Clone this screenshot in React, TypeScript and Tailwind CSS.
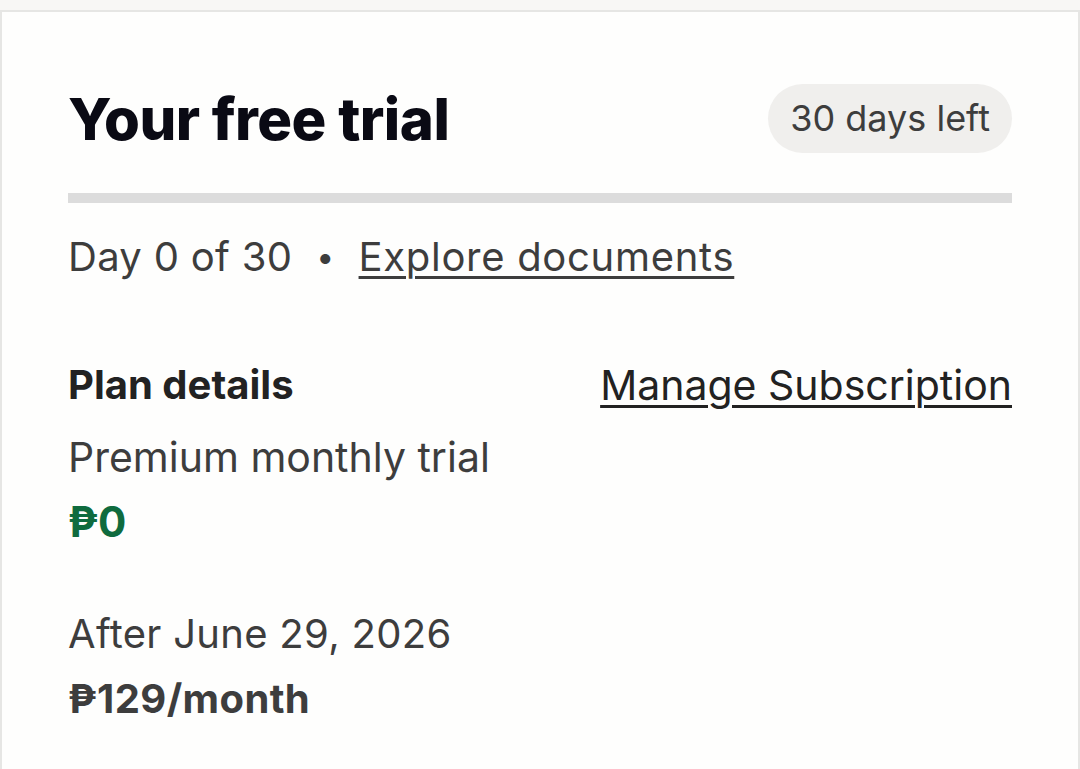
export default function App() {
  return (
    <div className="min-h-screen bg-[#f8f7f5] pt-[10px] font-['Inter',sans-serif]">
      <div className="h-[759px] border-l-2 border-r-2 border-t-2 border-[#e6e6e4] bg-[#fefefd] px-[66px] pt-[72px]">
        <div className="flex items-center justify-between">
          <h1 className="text-[58px] font-extrabold leading-[64px] tracking-[-0.5px] text-[#0a0a14]">Your free trial</h1>
          <span className="rounded-full bg-[#f0efed] px-[22px] py-[12px] text-[36px] leading-[45px] text-[#3d3d3d]">30 days left</span>
        </div>
        <div className="mt-[40px] h-[10px] bg-[#dcdcdc]" />
        <div className="mt-[29px] flex items-center text-[40px] leading-[50px] tracking-[0.3px] text-[#3d3d3d]">
          <span>Day 0 of 30</span>
          <span className="mx-[24px] text-[32px]">•</span>
          <a href="#" className="tracking-[0.7px] underline decoration-[3px] underline-offset-[5px]">Explore documents</a>
        </div>
        <div className="mt-[78px] flex items-center justify-between">
          <h2 className="text-[40px] font-bold leading-[50px] text-[#222222]">Plan details</h2>
          <a href="#" className="text-[41px] leading-[50px] text-[#222222] underline decoration-[3px] underline-offset-[5px]">Manage Subscription</a>
        </div>
        <p className="mt-[22px] text-[41px] leading-[50px] text-[#3d3d3d]">Premium monthly trial</p>
        <p className="mt-[15px] text-[42px] font-bold leading-[50px] text-[#0f6b3e]">₱0</p>
        <p className="mt-[62px] text-[40px] leading-[50px] tracking-[0.3px] text-[#3d3d3d]">After June 29, 2026</p>
        <p className="mt-[15px] text-[40px] font-bold leading-[50px] tracking-[0.4px] text-[#3d3d3d]">₱129/month</p>
      </div>
    </div>
  );
}
